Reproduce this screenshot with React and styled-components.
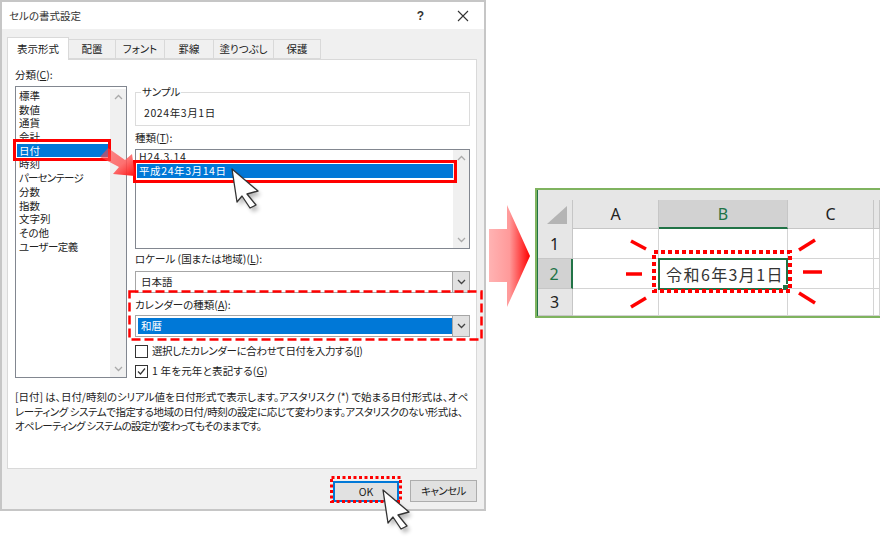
import React from "react";
import styled, { createGlobalStyle } from "styled-components";

const Global = createGlobalStyle`
  html, body { margin: 0; padding: 0; background: #fff; }
  body { font-family: "Noto Sans CJK JP", "Noto Sans", sans-serif; color: #222; font-size: 10.5px; line-height: 14px; font-feature-settings: "palt"; }
  u { text-underline-offset: 1px; }
`;

const Page = styled.div`
  position: relative; width: 880px; height: 540px; overflow: hidden;
  display: flex; align-items: flex-start;
`;
const Dialog = styled.div`
  box-sizing: border-box; width: 486px; height: 511px; border: 2px solid #c6c6c6;
  background: #f0f0f0; display: flex; flex-direction: column; flex: none;
`;
const TitleBar = styled.div`
  height: 27px; background: #fff; display: flex; align-items: center;
  padding: 0 15px 0 7px; flex: none;
`;
const Title = styled.div`flex: 1; font-size: 10.5px; color: #333;`;
const Help = styled.div`font: bold 12px "Liberation Sans", sans-serif; margin-right: 33px; color: #333;`;
const Tabs = styled.div`display: flex; align-items: flex-end; height: 30px; padding-left: 5px; flex: none;`;
const Tab = styled.div`
  box-sizing: border-box; width: ${p => p.$w}px; height: ${p => p.$active ? 23 : 20}px;
  background: ${p => p.$active ? "#fff" : "#f0f0f0"};
  border: 1px solid #d9d9d9; border-bottom: ${p => p.$active ? "none" : "1px solid #d9d9d9"};
  margin-left: ${p => p.$active ? 0 : -1}px; margin-bottom: ${p => p.$active ? -1 : 0}px;
  display: flex; align-items: center; justify-content: center; white-space: nowrap;
  font-size: 10.5px; position: relative; z-index: ${p => p.$active ? 1 : 0};
`;
const Panel = styled.div`
  box-sizing: border-box; margin-left: 5px; width: 470px; height: 410px; background: #fff;
  border: 1px solid #d9d9d9; padding: 8px 6px 0 7px; flex: none;
`;
const Columns = styled.div`display: flex; gap: 8px; height: 310px;`;
const LeftCol = styled.div`width: 112px; flex: none; display: flex; flex-direction: column;`;
const RightCol = styled.div`width: 335px; flex: none; display: flex; flex-direction: column;`;
const Label = styled.div`height: 14px; white-space: nowrap; margin-top: ${p => p.$mt || 0}px;`;
const CategoryBox = styled.div`
  box-sizing: border-box; margin-top: 4px; height: 292px; border: 1px solid #828790;
  background: #fff; padding: 2px 0 0 1px; display: flex; position: relative;
`;
const Items = styled.div`flex: 1; min-width: 0;`;
const Item = styled.div`
  height: ${p => p.$h || 13.7}px; line-height: ${p => p.$h || 13.7}px; padding-left: 2px; white-space: nowrap;
  letter-spacing: ${p => p.$ls || 0}px;
  background: ${p => p.$sel ? "#0078d7" : "transparent"}; color: ${p => p.$sel ? "#fff" : "#222"};
`;
const ScrollTrack = styled.div`
  width: 16px; flex: none; background: #f0f0f0; display: flex; flex-direction: column; align-self: stretch;
  justify-content: space-between; align-items: center; padding: 5px 0;
`;
const SampleGroup = styled.fieldset`
  box-sizing: border-box; margin: 18px 0 0; padding: 8px 0 0 8px; height: 40px; border: 1px solid #dcdcdc;
  letter-spacing: .6px;
`;
const Legend = styled.legend`padding: 0 1px; margin-left: -3px; font-size: 10.5px; line-height: 12px; letter-spacing: 0;`;
const TypeBox = styled.div`
  box-sizing: border-box; margin-top: 4px; height: 100px; border: 1px solid #828790; display: flex; padding: 0 0 0 1px;
`;
const ComboBox = styled.div`
  box-sizing: border-box; margin-top: ${p => p.$mt}px; height: 22px; border: 1px solid #a6a6a6; background: #fff;
  display: flex; align-items: stretch; padding: 2px 0 2px 2px;
`;
const ComboText = styled.div`
  flex: 1; padding-left: 3px; display: flex; align-items: center;
  background: ${p => p.$sel ? "#0078d7" : "transparent"}; color: ${p => p.$sel ? "#fff" : "#222"};
`;
const ComboButton = styled.div`
  width: 16px; margin: -2px 0; background: #e1e1e1; border-left: 1px solid #a6a6a6; display: flex; align-items: center; justify-content: center; flex: none;
`;
const CheckRow = styled.div`display: flex; align-items: center; gap: 4px; height: 14px; margin-top: ${p => p.$mt}px; white-space: nowrap;`;
const CheckText = styled.span`letter-spacing: ${p => p.$ls}px;`;
const CheckBox = styled.div`
  box-sizing: border-box; width: 13px; height: 13px; border: 1px solid #333; background: #fff; display: flex; flex: none;
`;
const Description = styled.div`margin: 0; padding-top: 12px;`;
const DescLine = styled.div`white-space: nowrap; height: 14.5px; line-height: 14.5px; letter-spacing: ${p => p.$ls}px;`;
const Footer = styled.div`display: flex; justify-content: flex-end; gap: 11px; padding: 11px 7px 0 0; align-items: flex-start;`;
const Button = styled.div`
  box-sizing: border-box; width: ${p => p.$w}px; height: ${p => p.$def ? 21 : 22}px; background: #e1e1e1;
  border: ${p => p.$def ? "2px solid #0078d7" : "1px solid #adadad"};
  display: flex; align-items: center; justify-content: center; font-size: 10.5px;
  margin-top: ${p => p.$def ? 1 : 0}px; letter-spacing: ${p => p.$def ? 0 : -.6}px;
`;

const BigArrow = styled.svg`flex: none; margin: 205px 0 0 3px; display: block;`;
const Sheet = styled.div`
  box-sizing: border-box; margin: 188px 0 0 5px; width: 345px; height: 130px; flex: none;
  border: 2px solid #7fb35f; border-right: none; background: #fff; position: relative;
  display: grid; grid-template-columns: 36px 86px 129px 86px 1fr; grid-template-rows: 10px 29px 30px 30px 1fr;
  &::before { content: ""; position: absolute; left: 0; top: 0; bottom: 0; width: 1px; background: #217346; z-index: 2; }
`;
const TopBand = styled.div`grid-column: 1 / -1; background: #e6e6e6;`;
const Corner = styled.div`background: #e6e6e6; border-right: 1px solid #c6c6c6; display: flex; align-items: flex-end; justify-content: flex-end; padding: 0 4px 5px 0;`;
const ColHead = styled.div`
  box-sizing: border-box; background: ${p => p.$sel ? "#d2d2d2" : "#e6e6e6"}; color: ${p => p.$sel ? "#217346" : "#222"};
  border-right: 1px solid #c6c6c6; border-bottom: ${p => p.$sel ? "2px solid #217346" : "1px solid #c6c6c6"};
  display: flex; align-items: center; justify-content: center; font: 16px "Noto Sans", sans-serif;
`;
const RowHead = styled.div`
  box-sizing: border-box; background: ${p => p.$sel ? "#d2d2d2" : "#e6e6e6"}; color: ${p => p.$sel ? "#217346" : "#222"};
  border-right: ${p => p.$sel ? "2px solid #217346" : "1px solid #c6c6c6"}; border-bottom: 1px solid #c6c6c6;
  display: flex; align-items: center; justify-content: center; font: 16px "Noto Sans", sans-serif;
`;
const Cell = styled.div`box-sizing: border-box; border-right: 1px solid #d4d4d4; border-bottom: 1px solid #d4d4d4;`;
const ActiveCell = styled.div`
  box-sizing: border-box; border: 2px solid #217346; margin: -1px 0 -1px -1px; display: flex; align-items: center;
  justify-content: center; font-size: 16px; letter-spacing: 1.4px; white-space: nowrap; position: relative; color: #333;
  font-feature-settings: normal; padding-left: 4px;
`;
const Handle = styled.div`position: absolute; right: -3px; bottom: -3px; width: 5px; height: 5px; background: #217346; border: 1px solid #fff;`;

const RedBox = styled.div`
  position: absolute; box-sizing: border-box; left: ${p => p.$x}px; top: ${p => p.$y}px; width: ${p => p.$w}px; height: ${p => p.$h}px;
  border: 3px solid #f00; z-index: 5;
`;
const Overlay = styled.svg`position: absolute; left: 0; top: 0; z-index: 6; pointer-events: none;`;

const Chevron = ({ up, color = "#555" }) => (
  <svg width="9" height="6" viewBox="0 0 9 6"><path d={up ? "M1 5L4.5 1.5 8 5" : "M1 1L4.5 4.5 8 1"} fill="none" stroke={color} strokeWidth="1.3" /></svg>
);

const cats = [["標準"], ["数値"], ["通貨"], ["会計"], ["日付"], ["時刻"], ["パーセンテージ", -.8], ["分数"], ["指数"], ["文字列"], ["その他"], ["ユーザー定義", -.5]];
const tabs = [["表示形式", 62], ["配置", 48], ["フォント", 50], ["罫線", 50], ["塗りつぶし", 61], ["保護", 48]];

const cursorPts = "0,0 26,22 15,25 24,36 18,39 10,27 5,33";
const Cursor = ({ x, y }) => (
  <g transform={`translate(${x} ${y})`}>
    <polygon points={cursorPts} fill="#000" opacity=".28" transform="translate(3 4)" filter="url(#soft)" />
    <polygon points={cursorPts} fill="#fff" stroke="#333" strokeWidth="1.3" strokeLinejoin="round" />
  </g>
);

const bursts = [[631,241,646,249],[626,274,642,274],[631,307,646,298],[815,240,799,250],[803,272,822,272],[799,293,815,303]];

export default function App() {
  return (
    <Page>
      <Global />
      <Dialog>
        <TitleBar>
          <Title>セルの書式設定</Title>
          <Help>?</Help>
          <svg width="12" height="12" viewBox="0 0 12 12"><path d="M1 1L11 11M11 1L1 11" stroke="#333" strokeWidth="1.1" /></svg>
        </TitleBar>
        <Tabs>
          {tabs.map(([t, w], i) => <Tab key={t} $w={w} $active={i === 0}>{t}</Tab>)}
        </Tabs>
        <Panel>
          <Columns>
            <LeftCol>
              <Label>分類(<u>C</u>):</Label>
              <CategoryBox>
                <Items>{cats.map(([c, ls]) => <Item key={c} $ls={ls} $sel={c === "日付"}>{c}</Item>)}</Items>
                <ScrollTrack><Chevron up color="#aaa" /><Chevron color="#aaa" /></ScrollTrack>
              </CategoryBox>
            </LeftCol>
            <RightCol>
              <SampleGroup>
                <Legend>サンプル</Legend>
                2024年3月1日
              </SampleGroup>
              <Label $mt={5}>種類(<u>T</u>):</Label>
              <TypeBox>
                <Items>
                  <Item $h={14} $ls={.6}>H24.3.14</Item>
                  <Item $h={14} $ls={.6} $sel>平成24年3月14日</Item>
                </Items>
                <ScrollTrack><Chevron up color="#aaa" /><Chevron color="#aaa" /></ScrollTrack>
              </TypeBox>
              <Label $mt={3}>ロケール (国または地域)(<u>L</u>):</Label>
              <ComboBox $mt={5}><ComboText>日本語</ComboText><ComboButton><Chevron color="#444" /></ComboButton></ComboBox>
              <Label $mt={5}>カレンダーの種類(<u>A</u>):</Label>
              <ComboBox $mt={3}><ComboText $sel>和暦</ComboText><ComboButton><Chevron color="#444" /></ComboButton></ComboBox>
              <CheckRow $mt={7}><CheckBox /><CheckText $ls={-.4}>選択したカレンダーに合わせて日付を入力する(<u>I</u>)</CheckText></CheckRow>
              <CheckRow $mt={6}>
                <CheckBox><svg width="11" height="11" viewBox="0 0 11 11"><path d="M2 5.5L4.5 8 9 2.5" fill="none" stroke="#333" strokeWidth="1.2" /></svg></CheckBox>
                <CheckText $ls={.2}>1 年を元年と表記する(<u>G</u>)</CheckText>
              </CheckRow>
            </RightCol>
          </Columns>
          <Description>
            <DescLine $ls={-.04}>[日付] は、日付/時刻のシリアル値を日付形式で表示します。アスタリスク (*) で始まる日付形式は、オペ</DescLine>
            <DescLine $ls={-.44}>レーティング システムで指定する地域の日付/時刻の設定に応じて変わります。アスタリスクのない形式は、</DescLine>
            <DescLine $ls={-.75}>オペレーティング システムの設定が変わってもそのままです。</DescLine>
          </Description>
        </Panel>
        <Footer>
          <Button $w={66} $def>OK</Button>
          <Button $w={67}>キャンセル</Button>
        </Footer>
      </Dialog>

      <BigArrow width="41" height="102" viewBox="0 0 41 102">
        <defs>
          <linearGradient id="bigG" x1="0" x2="1" y1="0" y2="0">
            <stop offset="0" stopColor="#ffb3b3" />
            <stop offset=".5" stopColor="#ff9a9a" />
            <stop offset="1" stopColor="#ff0000" />
          </linearGradient>
        </defs>
        <polygon points="0,24 18,24 18,0 41,51 18,102 18,77 0,77" fill="url(#bigG)" />
      </BigArrow>

      <Sheet>
        <TopBand />
        <Corner><svg width="21" height="18" viewBox="0 0 21 18"><polygon points="0,18 20,0 20,18" fill="#b4b4b4" /></svg></Corner>
        <ColHead>A</ColHead>
        <ColHead $sel>B</ColHead>
        <ColHead>C</ColHead>
        <ColHead />
        <RowHead>1</RowHead><Cell /><Cell /><Cell /><Cell />
        <RowHead $sel>2</RowHead><Cell />
        <ActiveCell>令和6年3月1日<Handle /></ActiveCell>
        <Cell /><Cell />
        <RowHead>3</RowHead><Cell /><Cell /><Cell /><Cell />
      </Sheet>

      <RedBox $x={13} $y={139} $w={98} $h={22} />
      <RedBox $x={133} $y={160} $w={324} $h={23} />

      <Overlay width="880" height="540" viewBox="0 0 880 540">
        <defs>
          <filter id="soft" x="-30%" y="-30%" width="160%" height="160%"><feGaussianBlur stdDeviation="2" /></filter>
          <linearGradient id="smallG" x1="0" y1="0" x2="1" y2="1">
            <stop offset="0" stopColor="#ff3a3a" stopOpacity=".5" />
            <stop offset=".6" stopColor="#ff5a5a" stopOpacity=".85" />
            <stop offset="1" stopColor="#ff1010" />
          </linearGradient>
        </defs>
        <polygon points="100,157 108,148 125,160 132,154 135,176 113,174 119,167" fill="url(#smallG)" />
        <rect x="129.5" y="291.5" width="352" height="48" fill="none" stroke="#f00" strokeWidth="2.5" strokeDasharray="9 4" />
        <rect x="331.5" y="477.5" width="69" height="24" fill="none" stroke="#f00" strokeWidth="3" strokeDasharray="3 2.5" />
        <rect x="654" y="252" width="136" height="39" fill="none" stroke="#f00" strokeWidth="4" strokeDasharray="4 3" />
        {bursts.map(([a, b, c, d]) => <line key={a + "" + b} x1={a} y1={b} x2={c} y2={d} stroke="#f00" strokeWidth="3.5" />)}
        <Cursor x={232} y={169} />
        <Cursor x={383} y={490} />
      </Overlay>
    </Page>
  );
}
